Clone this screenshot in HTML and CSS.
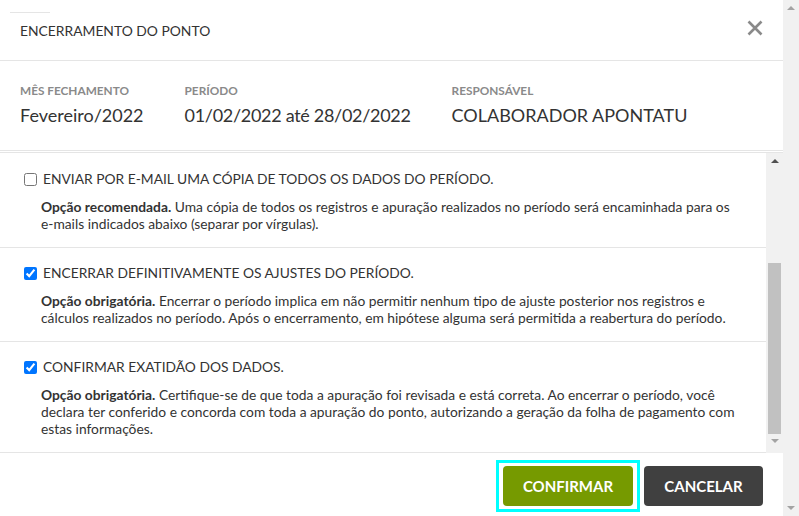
FILE: index.html
```html
<!DOCTYPE html>
<html lang="pt-BR">
<head>
<meta charset="utf-8">
<title>Encerramento do ponto</title>
<link rel="stylesheet" href="styles.css">
</head>
<body>
<div class="page">
  <div class="modal">
    <div class="modal-header">
      <div class="top-rule"></div>
      <div class="title-row">
        <h1 class="title">ENCERRAMENTO DO PONTO</h1>
        <button class="close" aria-label="Fechar">
          <svg width="16" height="16" viewBox="0 0 16 16"><path d="M1.5 1.5 L14.5 14.5 M14.5 1.5 L1.5 14.5" stroke="#8a8a8a" stroke-width="2.6" stroke-linecap="butt"/></svg>
        </button>
      </div>
    </div>
    <div class="info">
      <div class="info-col">
        <div class="info-label">MÊS FECHAMENTO</div>
        <div class="info-value">Fevereiro/2022</div>
      </div>
      <div class="info-col">
        <div class="info-label">PERÍODO</div>
        <div class="info-value info-value-tight">01/02/2022 até 28/02/2022</div>
      </div>
      <div class="info-col">
        <div class="info-label">RESPONSÁVEL</div>
        <div class="info-value">COLABORADOR APONTATU</div>
      </div>
    </div>
    <div class="scroll-area">
      <div class="options">
        <div class="option">
          <label class="option-label"><input type="checkbox" class="check"><span>ENVIAR POR E-MAIL UMA CÓPIA DE TODOS OS DADOS DO PERÍODO.</span></label>
          <p class="option-desc"><strong>Opção recomendada.</strong> Uma cópia de todos os registros e apuração realizados no período será encaminhada para os <span class="nowrap">e-mails</span> indicados abaixo (separar por vírgulas).</p>
        </div>
        <div class="option">
          <label class="option-label"><input type="checkbox" class="check" checked><span>ENCERRAR DEFINITIVAMENTE OS AJUSTES DO PERÍODO.</span></label>
          <p class="option-desc"><strong>Opção obrigatória.</strong> Encerrar o período implica em não permitir nenhum tipo de ajuste posterior nos registros e cálculos realizados no período. Após o encerramento, em hipótese alguma será permitida a reabertura do período.</p>
        </div>
        <div class="option">
          <label class="option-label"><input type="checkbox" class="check" checked><span>CONFIRMAR EXATIDÃO DOS DADOS.</span></label>
          <p class="option-desc"><strong>Opção obrigatória.</strong> Certifique-se de que toda a apuração foi revisada e está correta. Ao encerrar o período, você declara ter conferido e concorda com toda a apuração do ponto, autorizando a geração da folha de pagamento com estas informações.</p>
        </div>
      </div>
      <div class="inner-scrollbar">
        <div class="arrow-up dark"></div>
        <div class="track"><div class="thumb"></div></div>
        <div class="arrow-down"></div>
      </div>
    </div>
    <div class="modal-footer">
      <span class="focus-ring"><button class="btn btn-confirm">CONFIRMAR</button></span>
      <button class="btn btn-cancel">CANCELAR</button>
    </div>
  </div>
</div>
<div class="page-scrollbar">
  <div class="arrow-up"></div>
  <div class="arrow-down"></div>
</div>
</body>
</html>
```

FILE: styles.css
```css
* { box-sizing: border-box; }
html, body { margin: 0; padding: 0; height: 100%; }
body {
  display: flex;
  font-family: Lato, "Open Sans", sans-serif;
  color: #333;
  background: #fff;
  overflow: hidden;
}
.page { flex: 1; min-width: 0; }
.modal { display: flex; flex-direction: column; height: 516px; background: #fff; }

.modal-header {
  display: flex;
  flex-direction: column;
  height: 61px;
  border-bottom: 1px solid #e5e5e5;
}
.top-rule { margin: 12px 0 0 10px; width: 40px; height: 1px; background: #e5e5e5; }
.title-row {
  display: flex;
  align-items: center;
  justify-content: space-between;
  height: 34px;
  padding: 0 20px;
}
.title { margin: 0; font-size: 13.85px; font-weight: 400; color: #333; }
.close {
  border: 0; background: none; padding: 0; width: 16px; height: 16px;
  display: flex; margin-top: -5px; cursor: pointer;
}

.info {
  display: flex;
  gap: 41px;
  padding: 22px 20px 0;
  height: 90px;
  border-bottom: 1px solid #e5e5e5;
}
.info-label { font-size: 11.8px; font-weight: 700; color: #8a8a8a; line-height: 15px; }
.info-value { font-size: 18px; color: #333; line-height: 22px; margin-top: 6px; }
.info-value-tight { letter-spacing: -0.3px; }

.scroll-area {
  display: flex;
  height: 301px;
  margin-top: 1px;
  border-top: 1px solid #e5e5e5;
}
.options { flex: 1; padding-top: 1px; border-bottom: 1px solid #e5e5e5; }
.option { padding: 15px 20px 15px 24px; border-bottom: 1px solid #e5e5e5; }
.option:last-child { border-bottom: 0; }
.option-label {
  display: flex; align-items: center; gap: 6px;
  font-size: 13.8px; line-height: 20px; color: #333;
}
.check { margin: 0; width: 13px; height: 13px; }
.option-desc {
  margin: 9px 0 0 17px;
  font-size: 13.8px; line-height: 17px; color: #333;
}
.option-desc strong { font-weight: 700; }
.nowrap { white-space: nowrap; }

.inner-scrollbar {
  width: 17px;
  background: #f1f1f1;
  display: flex; flex-direction: column; align-items: center;
}
.inner-scrollbar .arrow-up { margin: 6px 0 0; }
.track { flex: 1; width: 100%; display: flex; flex-direction: column; justify-content: flex-end; padding: 0 2px; }
.thumb { height: 171px; background: #c1c1c1; margin-bottom: 5px; }
.inner-scrollbar .arrow-down { margin: 0 0 10px; }

.arrow-up, .arrow-down { width: 0; height: 0; border-left: 4px solid transparent; border-right: 4px solid transparent; }
.arrow-up { border-bottom: 4px solid #a3a3a3; }
.arrow-down { border-top: 4px solid #a3a3a3; }
.arrow-up.dark { border-bottom-color: #505050; }

.modal-footer {
  flex: 1;
  display: flex;
  justify-content: flex-end;
  align-items: flex-start;
  gap: 4px;
  padding: 7px 20px 0;
}
.focus-ring {
  display: flex;
  border: 3px solid #00ffff;
  padding: 3px 4px;
}
.btn {
  height: 40px; border: 0; border-radius: 4px;
  font-family: Lato, sans-serif; font-size: 15px; font-weight: 700;
  color: #fff; padding: 0;
}
.btn-confirm { width: 130px; background: #769a00; }
.btn-cancel { width: 119px; background: #404040; margin-top: 6px; }

.page-scrollbar {
  width: 16px; background: #f1f1f1;
  display: flex; flex-direction: column; align-items: center; justify-content: space-between;
  padding: 6px 0 6px;
}
```
